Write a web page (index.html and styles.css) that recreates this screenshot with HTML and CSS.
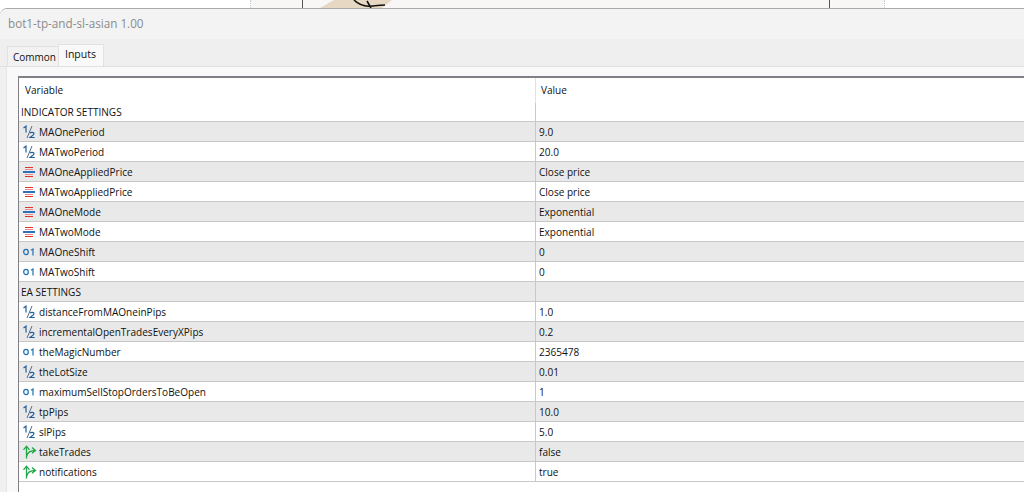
FILE: index.html
```html
<!DOCTYPE html>
<html lang="en">
<head>
<meta charset="utf-8">
<title>bot1-tp-and-sl-asian 1.00</title>
<link rel="stylesheet" href="styles.css">
</head>
<body>
<svg width="0" height="0" class="defs">
  <defs>
    <symbol id="i-half" viewBox="0 0 14 14">
      <path d="M.5 3 3 1.200V7.500" fill="none" stroke="#1f5f9e" stroke-width="1.200"/>
      <path d="M9 1 4 13" fill="none" stroke="#5a6a7a" stroke-width="1"/>
      <path d="M7 8.200c.8-1.200 4-1.200 4 .6 0 1.400-2.600 2.400-4 3.700h4.700" fill="none" stroke="#1f5f9e" stroke-width="1.200"/>
    </symbol>
    <symbol id="i-enum" viewBox="0 0 14 14">
      <path d="M2 2.500h8M2 11.500h8" fill="none" stroke="#e2302a" stroke-width="1"/>
      <path d="M2 4.500h8M2 9.500h8" fill="none" stroke="#ee8a84" stroke-width="1"/>
      <path d="M0 7h12" fill="none" stroke="#2a72c0" stroke-width="2"/>
    </symbol>
    <symbol id="i-int" viewBox="0 0 14 14">
      <ellipse cx="3" cy="7" rx="2.300" ry="2.700" fill="none" stroke="#1f6fb4" stroke-width="1.200"/>
      <path d="M8 5.200 10 4V10.500" fill="none" stroke="#1f6fb4" stroke-width="1.200"/>
    </symbol>
    <symbol id="i-bool" viewBox="0 0 14 14">
      <path d="M3.500 13.500V1.500M.5 4.800 3.500 1.200 6.500 4.800" fill="none" stroke="#1ea847" stroke-width="1.300"/>
      <path d="M3.700 11C4.500 7 7.500 5.500 12.300 5.500M9 2.500 12.500 5.500 9 8.300" fill="none" stroke="#1ea847" stroke-width="1.300"/>
    </symbol>
  </defs>
</svg>
<div class="chart-strip">
  <div class="chart-ticks"></div>
  <div class="chart-shape"></div>
  <div class="chart-bar chart-bar-a"></div>
  <div class="chart-bar chart-bar-b"></div>
  <svg class="chart-stroke" width="40" height="9" viewBox="0 0 40 9"><path d="M4 0c5 5 10 7 18 6 4-.4 8-1 13-1M17 1l4 7" fill="none" stroke="#111" stroke-width="1.600"/></svg>
</div>
<div class="dialog">
  <div class="title">bot1-tp-and-sl-asian 1.00</div>
  <div class="tabs">
    <div class="tab">Common</div>
    <div class="tab active">Inputs</div>
  </div>
  <div class="panel">
    <div class="grid">
      <div class="head"><div class="c1">Variable</div><div class="c2">Value</div></div>
      <div class="row group first"><div class="c1">INDICATOR SETTINGS</div><div class="c2"></div></div>
      <div class="row odd"><div class="c1"><svg class="ic"><use href="#i-half"/></svg>MAOnePeriod</div><div class="c2">9.0</div></div>
      <div class="row"><div class="c1"><svg class="ic"><use href="#i-half"/></svg>MATwoPeriod</div><div class="c2">20.0</div></div>
      <div class="row odd"><div class="c1"><svg class="ic"><use href="#i-enum"/></svg>MAOneAppliedPrice</div><div class="c2">Close price</div></div>
      <div class="row"><div class="c1"><svg class="ic"><use href="#i-enum"/></svg>MATwoAppliedPrice</div><div class="c2">Close price</div></div>
      <div class="row odd"><div class="c1"><svg class="ic"><use href="#i-enum"/></svg>MAOneMode</div><div class="c2">Exponential</div></div>
      <div class="row"><div class="c1"><svg class="ic"><use href="#i-enum"/></svg>MATwoMode</div><div class="c2">Exponential</div></div>
      <div class="row odd"><div class="c1"><svg class="ic"><use href="#i-int"/></svg>MAOneShift</div><div class="c2">0</div></div>
      <div class="row"><div class="c1"><svg class="ic"><use href="#i-int"/></svg>MATwoShift</div><div class="c2">0</div></div>
      <div class="row odd group"><div class="c1">EA SETTINGS</div><div class="c2"></div></div>
      <div class="row"><div class="c1"><svg class="ic"><use href="#i-half"/></svg>distanceFromMAOneinPips</div><div class="c2">1.0</div></div>
      <div class="row odd"><div class="c1"><svg class="ic"><use href="#i-half"/></svg>incrementalOpenTradesEveryXPips</div><div class="c2">0.2</div></div>
      <div class="row"><div class="c1"><svg class="ic"><use href="#i-int"/></svg>theMagicNumber</div><div class="c2">2365478</div></div>
      <div class="row odd"><div class="c1"><svg class="ic"><use href="#i-half"/></svg>theLotSize</div><div class="c2">0.01</div></div>
      <div class="row"><div class="c1"><svg class="ic"><use href="#i-int"/></svg>maximumSellStopOrdersToBeOpen</div><div class="c2">1</div></div>
      <div class="row odd"><div class="c1"><svg class="ic"><use href="#i-half"/></svg>tpPips</div><div class="c2">10.0</div></div>
      <div class="row"><div class="c1"><svg class="ic"><use href="#i-half"/></svg>slPips</div><div class="c2">5.0</div></div>
      <div class="row odd"><div class="c1"><svg class="ic"><use href="#i-bool"/></svg>takeTrades</div><div class="c2">false</div></div>
      <div class="row"><div class="c1"><svg class="ic"><use href="#i-bool"/></svg>notifications</div><div class="c2">true</div></div>
    </div>
  </div>
</div>
</body>
</html>
```
FILE: styles.css
```css
* { box-sizing: border-box; }
html, body { margin: 0; padding: 0; height: 492px; overflow: hidden; background: #fff; }
body { font-family: "Open Sans", "Noto Sans", sans-serif; font-size: 10.050px; color: #111; display: flex; flex-direction: column; }
.defs { position: absolute; }

.chart-strip { height: 8px; flex: none; background: #f8f7f5; position: relative; margin: 0 139px 0 250px; overflow: hidden; }
.chart-ticks { position: absolute; inset: 0; border-left: 1px dotted #ccc; border-right: 1px dotted #ccc; }
.chart-shape { position: absolute; left: 70px; top: 0; width: 76px; height: 8px; background: #e6d8c2; clip-path: polygon(14px 0, 72px 0, 62px 8px, 0 8px); }
.chart-bar { position: absolute; top: 0; width: 1px; height: 8px; background: #555; }
.chart-bar-a { left: 52px; }
.chart-bar-b { left: 579px; }
.chart-stroke { position: absolute; left: 100px; top: 0; }

.dialog { flex: 1; min-height: 0; display: flex; flex-direction: column; background: #f0f0f0; border-top: 1px solid #a8a8a8; border-top-left-radius: 7px; }
.title { height: 30px; flex: none; background: #f3f3f3; color: #8b8b8b; font-size: 11.700px; line-height: 29px; padding-left: 8px; border-top-left-radius: 7px; }
.tabs { height: 28px; flex: none; background: #efefef; display: flex; align-items: flex-end; padding-left: 7px; border-bottom: 1px solid #e0e0e0; }
.tab { height: 20px; width: 52px; padding-left: 5px; line-height: 21px; font-size: 10px; color: #111; background: #f2f2f2; border: 1px solid #e2e2e2; border-bottom: 0; }
.tab.active { height: 22px; width: 46px; padding-left: 6px; line-height: 19px; font-size: 10.500px; background: #f9f9f9; margin-left: -1px; }

.panel { flex: 1; min-height: 0; background: #f9f9f9; margin-left: 6px; padding: 9px 0 0 11px; border-left: 1px solid #e4e4e4; }
.grid { height: 100%; background: #fff; border-top: 2px solid #7f7f85; border-left: 1px solid #7f7f85; overflow: hidden; }

.head { display: flex; height: 25px; line-height: 24px; }
.head .c1 { width: 516px; padding-left: 6px; }
.head .c2 { flex: 1; padding-left: 5px; border-left: 1px solid #e2e2e2; }

.row { display: flex; height: 20px; line-height: 21px; border-bottom: 1px solid #c8c8c8; }
.row.first { height: 19px; line-height: 19px; }
.row.odd { background: #e9e9e9; }
.row .c1 { width: 516px; padding: 1px 0 0 2px; display: flex; align-items: center; white-space: nowrap; }
.row.first .c1 { padding-top: 0; }
.row .c2 { flex: 1; padding-left: 3px; border-left: 1px solid #c8c8c8; }
.ic { width: 14px; height: 14px; flex: none; margin-right: 2px; margin-left: 2px; }
```
